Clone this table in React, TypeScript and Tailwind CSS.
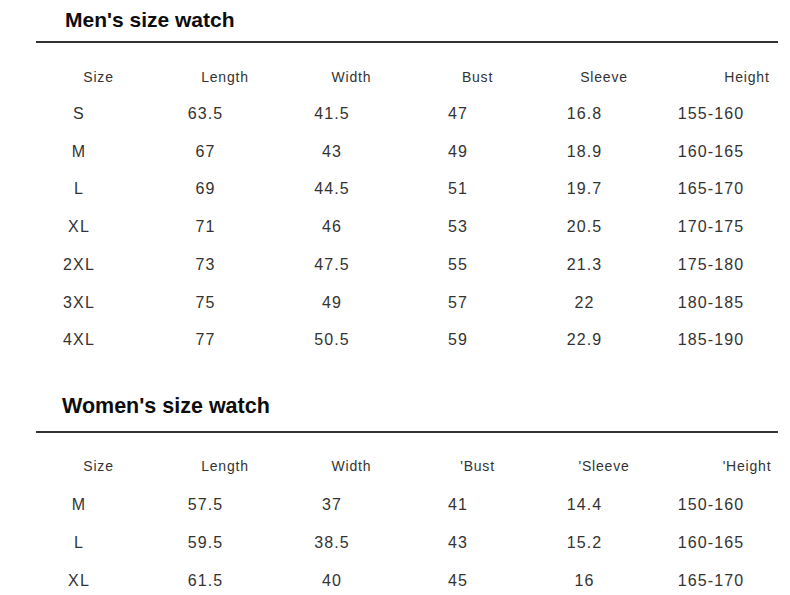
const COLS = ["w-[126px]", "w-[127px]", "w-[126px]", "w-[126px]", "w-[127px]", "w-[126px]"];

const MEN_HEAD = ["Size", "Length", "Width", "Bust", "Sleeve", "Height"];
const WOMEN_HEAD = ["Size", "Length", "Width", "'Bust", "'Sleeve", "'Height"];

const MEN_ROWS = [
  ["S", "63.5", "41.5", "47", "16.8", "155-160"],
  ["M", "67", "43", "49", "18.9", "160-165"],
  ["L", "69", "44.5", "51", "19.7", "165-170"],
  ["XL", "71", "46", "53", "20.5", "170-175"],
  ["2XL", "73", "47.5", "55", "21.3", "175-180"],
  ["3XL", "75", "49", "57", "22", "180-185"],
  ["4XL", "77", "50.5", "59", "22.9", "185-190"],
];

const WOMEN_ROWS = [
  ["M", "57.5", "37", "41", "14.4", "150-160"],
  ["L", "59.5", "38.5", "43", "15.2", "160-165"],
  ["XL", "61.5", "40", "45", "16", "165-170"],
];

function HeaderRow({ labels }: { labels: string[] }) {
  return (
    <div className="flex h-[36px] items-center pl-[16px] text-[14px] tracking-[0.8px] text-[#333]">
      {labels.map((label, i) => (
        <div
          key={label}
          className={`${COLS[i]} text-center ${i === 5 ? "pl-[72px]" : "pl-[39px]"}`}
        >
          {label}
        </div>
      ))}
    </div>
  );
}

function DataRow({ cells, tall }: { cells: string[]; tall?: boolean }) {
  return (
    <div
      className={`flex items-center pl-[16px] text-[16px] tracking-[1.1px] text-[#333] ${
        tall ? "h-[38px]" : "h-[37.75px]"
      }`}
    >
      {cells.map((cell, i) => (
        <div key={i} className={`${COLS[i]} text-center`}>
          {cell}
        </div>
      ))}
    </div>
  );
}

export default function App() {
  return (
    <div className="h-[595px] w-[790px] overflow-hidden bg-white font-['Liberation_Sans',Arial,sans-serif]">
      {/* men */}
      <div className="pl-[65px] pt-[6px] text-[21px] font-bold leading-[28px] text-[#0d0d0d]">
        Men's size watch
      </div>
      <div className="ml-[36px] mt-[7px] h-[2px] w-[742px] bg-[#333]" />
      <div className="mt-[16px]">
        <HeaderRow labels={MEN_HEAD} />
        {MEN_ROWS.map((row) => (
          <DataRow key={row[0]} cells={row} />
        ))}
      </div>

      {/* women */}
      <div className="mt-[33px] pl-[62px] text-[21.5px] font-bold leading-[28px] text-[#0d0d0d]">
        Women's size watch
      </div>
      <div className="ml-[36px] mt-[11px] h-[2px] w-[742px] bg-[#333]" />
      <div className="mt-[15px]">
        <HeaderRow labels={WOMEN_HEAD} />
        <div className="pt-[2px]">
          {WOMEN_ROWS.map((row) => (
            <DataRow key={row[0]} cells={row} tall />
          ))}
        </div>
      </div>
    </div>
  );
}
